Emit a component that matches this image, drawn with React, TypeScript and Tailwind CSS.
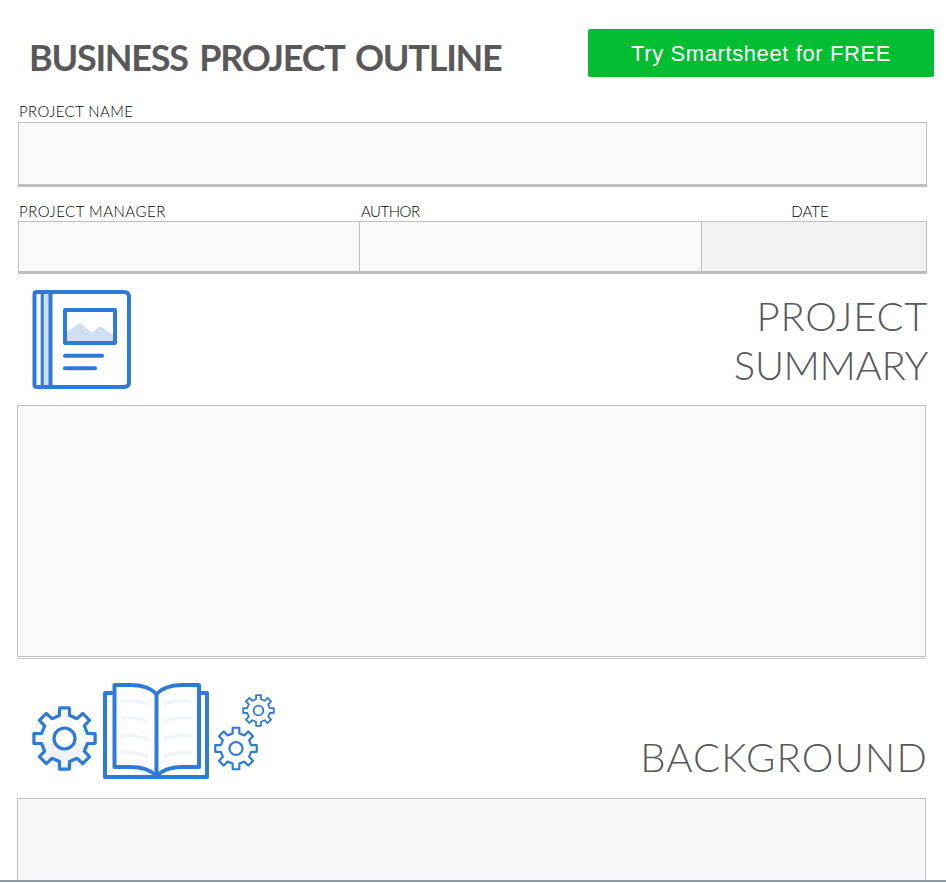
const BLUE = "#2e7ad8";

function gearPath(cx: number, cy: number, outer: number, root: number, teeth = 8) {
  const pts: string[] = [];
  const step = (Math.PI * 2) / teeth;
  const pt = (r: number, a: number) => `${(cx + r * Math.sin(a)).toFixed(2)} ${(cy - r * Math.cos(a)).toFixed(2)}`;
  for (let i = 0; i < teeth; i++) {
    const a = i * step;
    const o = step * 0.2;
    const b = step * 0.28;
    pts.push(pt(root, a - b), pt(outer, a - o), pt(outer, a + o), pt(root, a + b));
  }
  return "M" + pts.join("L") + "Z";
}

function Gear({ cx, cy, outer, root, hole, sw }: { cx: number; cy: number; outer: number; root: number; hole: number; sw: number }) {
  return (
    <g fill="none" stroke={BLUE} strokeWidth={sw} strokeLinejoin="round">
      <path d={gearPath(cx, cy, outer, root)} />
      <circle cx={cx} cy={cy} r={hole} />
    </g>
  );
}

function SummaryIcon() {
  return (
    <svg viewBox="30 288 104 104" className="w-[104px] h-[104px] shrink-0 ml-[30px] mt-[14px]">
      <rect x="43" y="292" width="7" height="95" fill="#cfe0f5" />
      <path d="M67 343V332L80 322.7L91.7 333L100 326L113 335V343Z" fill="#cfe0f5" />
      <g fill="none" stroke={BLUE} strokeWidth="4" strokeLinejoin="round" strokeLinecap="round">
        <path d="M50 292H36.5Q34.5 292 34.5 294V385Q34.5 387 36.5 387H50" />
        <path d="M42.2 292V387" strokeWidth="3" />
        <path d="M50.5 292H124Q129 292 129 297V382Q129 387 124 387H50.5V292Z" />
        <rect x="65" y="310" width="50" height="33" strokeLinecap="butt" />
        <path d="M65 355.7H102" />
        <path d="M65 368.3H95" />
      </g>
    </svg>
  );
}

function BackgroundIcon() {
  const ys = [701, 718, 736, 753];
  return (
    <svg viewBox="28 680 250 102" className="w-[250px] h-[102px] shrink-0 ml-[28px] mt-[21px]">
      <path d="M40 744A25 25 0 0 0 90 744Z" fill="#f1f4fa" />
      <Gear cx={64.5} cy={738.5} outer={31} root={23.5} hole={10.5} sw={3.2} />
      <Gear cx={236} cy={748.5} outer={21} root={15.5} hole={6.5} sw={2.2} />
      <Gear cx={258.5} cy={710.5} outer={15.5} root={11.5} hole={4.8} sw={1.8} />
      <g fill="none" stroke="#f1f5fa" strokeWidth="3.6" strokeLinecap="round">
        {ys.map((y) => (
          <g key={y}>
            <path d={`M122 ${y}Q138 ${y - 1} 147 ${y + 3}`} />
            <path d={`M190 ${y}Q174 ${y - 1} 165 ${y + 3}`} />
          </g>
        ))}
      </g>
      <g fill="none" stroke={BLUE} strokeLinejoin="round">
        <path d="M113 693H105V777H207V693H199" strokeWidth="4" />
        <path d="M114.5 685H130C142 685 151 688 156.5 694C162 688 171 685 183 685H199V767H183C171 767 162 770 156.5 776C151 770 142 767 130 767H114.5Z" strokeWidth="4" />
        <path d="M156.5 694V777" strokeWidth="4" />
      </g>
    </svg>
  );
}

export default function App() {
  const heading = "font-['Lato',sans-serif] text-[#595959] font-light text-[40px] leading-[49px] text-right";
  const label = "font-['Lato',sans-serif] font-light text-black text-[15px] leading-[19px]";
  return (
    <div className="w-[946px] h-[882px] bg-white border-b-2 border-[#8e99a5] overflow-hidden flex flex-col">
      <div className="h-[103px] flex items-start shrink-0">
        <h1 className="ml-[29px] mt-[31px] font-['Lato',sans-serif] font-bold text-[36px] leading-[52px] tracking-[-1.25px] [word-spacing:4px] text-[#595959] whitespace-nowrap">
          BUSINESS PROJECT OUTLINE
        </h1>
        <a className="ml-auto mr-[12px] mt-[29px] w-[346px] h-[48px] bg-[#00bd32] rounded-[2px] flex items-center justify-center font-['Liberation_Sans',Arial,sans-serif] text-white text-[22px] tracking-[0.6px]">
          Try Smartsheet for FREE
        </a>
      </div>

      <div className={`${label} ml-[19px] -mt-[1px] pb-[1px] tracking-[0.4px]`}>PROJECT NAME</div>
      <div className="ml-[18px] w-[909px] h-[65px] shrink-0 bg-[#f9f9f9] border border-b-[3px] border-[#bfbfbf]" />

      <div className={`${label} ml-[19px] w-[908px] mt-[15px] grid grid-cols-[342px_340px_1fr]`}>
        <div className="tracking-[0.5px]">PROJECT MANAGER</div>
        <div className="tracking-[-0.5px]">AUTHOR</div>
        <div className="text-center pr-[8px]">DATE</div>
      </div>
      <div className="ml-[18px] w-[909px] h-[53px] shrink-0 grid grid-cols-[341px_342px_1fr] border border-b-[3px] border-[#bfbfbf]">
        <div className="bg-[#f9f9f9] border-r border-[#bfbfbf]" />
        <div className="bg-[#f9f9f9] border-r border-[#bfbfbf]" />
        <div className="bg-[#f2f2f2]" />
      </div>

      <div className="h-[131px] shrink-0 flex justify-between">
        <SummaryIcon />
        <div className={`${heading} mr-[18px] mt-[18px]`}>
          <span className="tracking-[0.7px]">PROJECT</span>
          <br />
          <span className="tracking-[-0.35px]">SUMMARY</span>
        </div>
      </div>

      <div className="ml-[17px] w-[909px] h-[252px] shrink-0 bg-[#f9f9f9] border border-[#bfbfbf]" />
      <div className="ml-[17px] w-[909px] h-[1px] shrink-0 mt-[1px] bg-[#c8c8c8]" />

      <div className="h-[139px] shrink-0 flex justify-between">
        <BackgroundIcon />
        <div className={`${heading} mr-[18px] mt-[74px] tracking-[1.2px]`}>BACKGROUND</div>
      </div>

      <div className="ml-[17px] w-[909px] flex-1 bg-[#f7f8fa] border border-b-0 border-[#bfbfbf]" />
    </div>
  );
}
